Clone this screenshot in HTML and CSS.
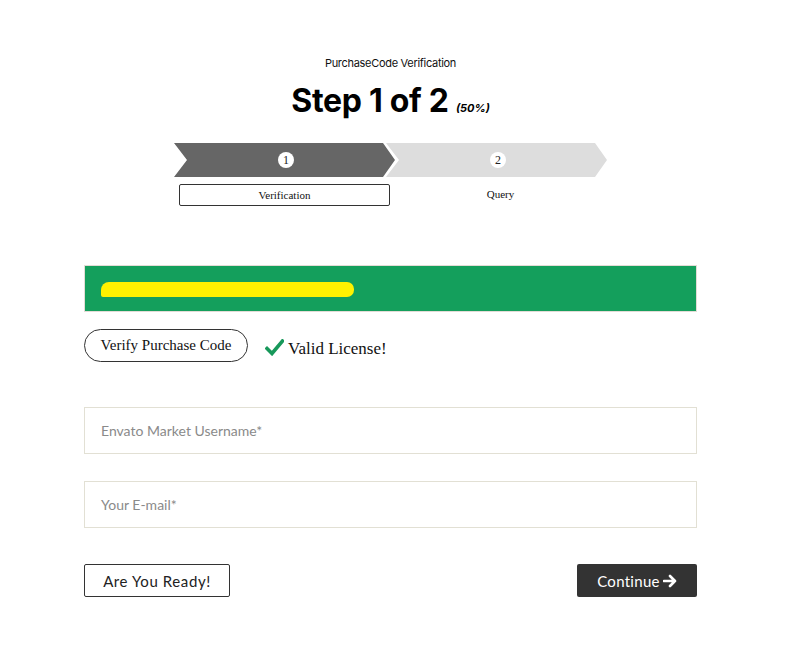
FILE: index.html
```html
<!DOCTYPE html>
<html>
<head>
<meta charset="utf-8">
<link rel="stylesheet" href="styles.css">
</head>
<body>
<main class="wrap">
  <header class="head">
    <p class="kicker">PurchaseCode Verification</p>
    <h2 class="title">Step 1 of 2 <em class="pct">(50%)</em></h2>
  </header>

  <div class="steps">
    <div class="chev chev-active"><span class="num">1</span></div>
    <div class="chev chev-next"><span class="num">2</span></div>
  </div>
  <div class="labels">
    <span class="lbl lbl-active">Verification</span>
    <span class="lbl">Query</span>
  </div>

  <div class="notice"><span class="redact">xxxxxxxxxxxxxxxxxxxxxxxxxxxxxxxxxxxx</span></div>

  <div class="verify-row">
    <button class="pill">Verify Purchase Code</button>
    <span class="valid">
      <svg class="check" width="19" height="17" viewBox="0 0 19 17"><path d="M2 9.5 L7 14.5 L17.5 2" fill="none" stroke="#17985a" stroke-width="3.6" stroke-linecap="square" stroke-linejoin="miter"/></svg>
      Valid License!
    </span>
  </div>

  <div class="field"><span class="ph">Envato Market Username*</span></div>
  <div class="field field-2"><span class="ph">Your E-mail*</span></div>

  <div class="actions">
    <button class="btn-outline">Are You Ready!</button>
    <button class="btn-dark">Continue
      <svg width="14" height="14" viewBox="0 0 14 14"><path d="M1 7 H12 M7 2 L12 7 L7 12" fill="none" stroke="#fff" stroke-width="2.6" stroke-linecap="round" stroke-linejoin="round"/></svg>
    </button>
  </div>
</main>
</body>
</html>
```
FILE: styles.css
```css
* { box-sizing: border-box; }
html, body { margin: 0; padding: 0; background: #fff; }
body { font-family: "Liberation Serif", serif; color: #111; }

.wrap {
  width: 613px;
  margin-left: 84px;
  padding-top: 56px;
  padding-bottom: 58px;
}

.head { text-align: center; }
.kicker {
  margin: 0;
  font-family: Inter, "Liberation Sans", sans-serif;
  font-size: 11px;
  line-height: 14px;
  color: #111;
  letter-spacing: -0.3px;
}
.title {
  margin: 12px 0 0;
  font-family: Inter, "Liberation Sans", sans-serif;
  font-weight: 700;
  font-size: 32px;
  line-height: 38px;
  letter-spacing: -0.3px;
  color: #000;
}
.pct {
  font-size: 11px;
  font-weight: 700;
  letter-spacing: 0;
  font-style: italic;
}

.steps {
  display: flex;
  margin: 16px 0 0 90px;
  height: 34px;
}
.chev {
  width: 221px;
  height: 34px;
  display: flex;
  align-items: center;
  justify-content: center;
  clip-path: polygon(0 0, calc(100% - 12px) 0, 100% 50%, calc(100% - 12px) 100%, 0 100%, 13px 50%);
}
.chev-active { background: #666; }
.chev-next { background: #ddd; margin-left: -9px; }
.num {
  width: 16px;
  height: 16px;
  border-radius: 50%;
  background: #fff;
  font-family: "Liberation Serif", serif;
  font-size: 12px;
  line-height: 16px;
  text-align: center;
  color: #222;
  margin-left: 3px;
}

.labels {
  display: flex;
  margin: 7px 0 0 95px;
  height: 22px;
}
.lbl {
  width: 211px;
  height: 22px;
  font-size: 11px;
  line-height: 20px;
  text-align: center;
  color: #111;
  border: 1px solid transparent;
}
.lbl-active {
  border-color: #333;
  border-radius: 2px;
}
.lbl + .lbl { margin-left: 5px; line-height: 18px; }

.notice {
  margin-top: 59px;
  height: 47px;
  background: #149f5c;
  border: 1px solid #e3dcd6;
  padding: 16px 0 0 16px;
}
.redact {
  display: inline-block;
  height: 15px;
  width: 253px;
  background: #fff200;
  color: #fff200;
  border-radius: 8px 7px 7px 2px;
  font-size: 11px;
  line-height: 15px;
  overflow: hidden;
  vertical-align: top;
}

.verify-row {
  margin-top: 17px;
  display: flex;
  align-items: center;
  height: 33px;
}
.pill {
  width: 164px;
  height: 33px;
  border: 1px solid #333;
  border-radius: 17px;
  background: #fff;
  font-family: "Liberation Serif", serif;
  font-size: 15px;
  color: #111;
  padding: 0;
}
.valid {
  margin-left: 17px;
  font-size: 17px;
  display: flex;
  align-items: center;
  gap: 4px;
  color: #111;
  padding-top: 7px;
}
.check { margin-top: -4px; }

.field {
  margin-top: 45px;
  height: 47px;
  border: 1px solid #e2e0d4;
  display: flex;
  align-items: center;
  padding-left: 16px;
}
.field-2 { margin-top: 27px; }
.ph {
  font-family: Lato, "Liberation Sans", sans-serif;
  font-size: 14px;
  color: #8a8a8a;
}

.actions {
  margin-top: 36px;
  display: flex;
  justify-content: space-between;
}
.btn-outline {
  width: 146px;
  height: 33px;
  border: 1px solid #333;
  border-radius: 2px;
  background: #fff;
  font-family: Lato, "Liberation Sans", sans-serif;
  font-size: 15px;
  color: #222;
  letter-spacing: 0.6px;
  padding: 0;
}
.btn-dark {
  width: 120px;
  height: 33px;
  border: none;
  border-radius: 2px;
  background: #333;
  font-family: Lato, "Liberation Sans", sans-serif;
  font-size: 15px;
  color: #fff;
  letter-spacing: 0.3px;
  display: flex;
  align-items: center;
  justify-content: center;
  gap: 3px;
  padding: 0;
}
```
